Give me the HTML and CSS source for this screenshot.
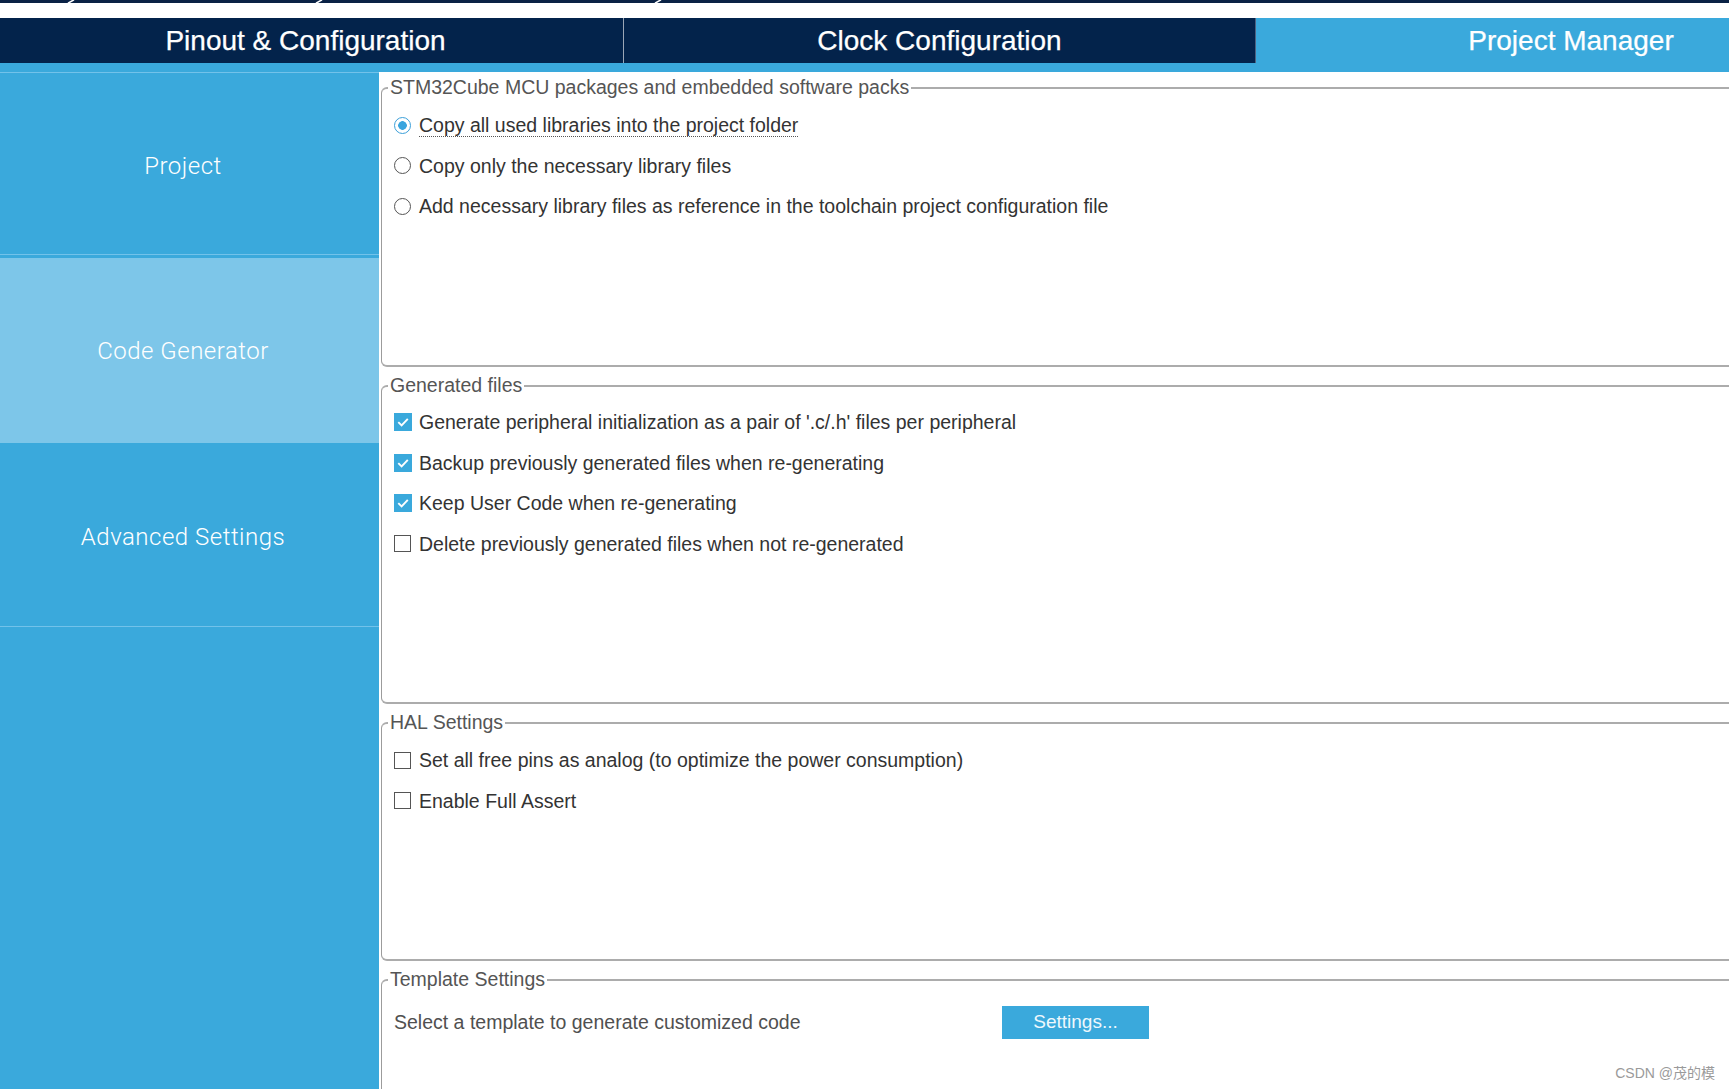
FILE: index.html
```html
<!DOCTYPE html>
<html lang="en">
<head>
<meta charset="utf-8">
<title>Project Manager - Code Generator</title>
<link rel="stylesheet" href="styles.css">
</head>
<body>
<div class="topstrip">
  <svg class="crumbs" width="1729" height="3" viewBox="0 0 1729 3">
    <rect x="0" y="0" width="1729" height="3" fill="#0a2245"/>
    <path d="M68 3.2 L74 -0.2 M316 3.2 L322 -0.2 M655 3.2 L661 -0.2" stroke="#fff" stroke-width="1.6"/>
  </svg>
</div>
<nav class="tabs">
  <div class="tab t1">Pinout &amp; Configuration</div>
  <div class="tab t2">Clock Configuration</div>
  <div class="tab t3">Project Manager</div>
</nav>
<div class="band"></div>
<div class="layout">
  <aside class="sidebar">
    <div class="side-item first">Project</div>
    <div class="side-item selected">Code Generator</div>
    <div class="side-item last">Advanced Settings</div>
  </aside>
  <main class="main">
    <section class="group g1">
      <div class="group-title"><span>STM32Cube MCU packages and embedded software packs</span></div>
      <div class="group-body">
        <div class="opt"><span class="radio on"></span><span class="txt focus">Copy all used libraries into the project folder</span></div>
        <div class="opt"><span class="radio"></span><span class="txt">Copy only the necessary library files</span></div>
        <div class="opt"><span class="radio"></span><span class="txt">Add necessary library files as reference in the toolchain project configuration file</span></div>
      </div>
    </section>
    <section class="group g2">
      <div class="group-title"><span>Generated files</span></div>
      <div class="group-body">
        <div class="opt"><svg class="cb" width="18" height="18" viewBox="0 0 18 18"><rect width="18" height="18" fill="#3aa9dc"/><path d="M4.3 9.2 L7.6 12.5 L13.8 5.8" fill="none" stroke="#fff" stroke-width="1.9"/></svg><span class="txt">Generate peripheral initialization as a pair of '.c/.h' files per peripheral</span></div>
        <div class="opt"><svg class="cb" width="18" height="18" viewBox="0 0 18 18"><rect width="18" height="18" fill="#3aa9dc"/><path d="M4.3 9.2 L7.6 12.5 L13.8 5.8" fill="none" stroke="#fff" stroke-width="1.9"/></svg><span class="txt">Backup previously generated files when re-generating</span></div>
        <div class="opt"><svg class="cb" width="18" height="18" viewBox="0 0 18 18"><rect width="18" height="18" fill="#3aa9dc"/><path d="M4.3 9.2 L7.6 12.5 L13.8 5.8" fill="none" stroke="#fff" stroke-width="1.9"/></svg><span class="txt">Keep User Code when re-generating</span></div>
        <div class="opt"><span class="box"></span><span class="txt">Delete previously generated files when not re-generated</span></div>
      </div>
    </section>
    <section class="group g3">
      <div class="group-title"><span>HAL Settings</span></div>
      <div class="group-body">
        <div class="opt"><span class="box"></span><span class="txt">Set all free pins as analog (to optimize the power consumption)</span></div>
        <div class="opt"><span class="box"></span><span class="txt">Enable Full Assert</span></div>
      </div>
    </section>
    <section class="group g4">
      <div class="group-title"><span>Template Settings</span></div>
      <div class="group-body">
        <div class="template-row">
          <span class="tlabel">Select a template to generate customized code</span>
          <button class="btn" type="button">Settings...</button>
        </div>
      </div>
    </section>
  </main>
</div>
<div class="watermark">CSDN @茂的模</div>
</body>
</html>
```
FILE: styles.css
```css
html, body {
  margin: 0;
  padding: 0;
}

body {
  width: 1729px;
  height: 1089px;
  overflow: hidden;
  position: relative;
  background: #ffffff;
  font-family: "Liberation Sans", Arial, "Noto Sans CJK SC", sans-serif;
}

.topstrip {
  height: 18px;
  background: #ffffff;
}

.crumbs {
  display: block;
}

.tabs {
  display: flex;
  height: 45px;
  background: #03234b;
  overflow: hidden;
}

.tab {
  flex: none;
  display: flex;
  align-items: center;
  justify-content: center;
  color: #ffffff;
  font-size: 28px;
  box-sizing: border-box;
  -webkit-text-stroke: 0.25px #ffffff;
}

.t1 {
  width: 624px;
  padding-right: 12px;
  border-right: 1px solid #9aa6b6;
}

.t2 {
  width: 632px;
  border-right: 1px solid #4d6180;
}

.t3 {
  width: 630px;
  background: #3aa9dc;
}

.band {
  height: 9px;
  background: #3aa9dc;
}

.layout {
  display: flex;
  height: 1017px;
}

.sidebar {
  flex: none;
  width: 379px;
  background: #3aa9dc;
  border-top: 1px solid #72c2ea;
  box-sizing: border-box;
}

.side-item {
  display: flex;
  align-items: center;
  justify-content: center;
  padding-right: 13px;
  color: #ffffff;
  font-family: Roboto, "Liberation Sans", Arial, sans-serif;
  font-weight: 300;
  letter-spacing: 0.5px;
  font-size: 24px;
  box-sizing: border-box;
}

.side-item.first {
  height: 182px;
  padding-top: 4px;
  border-bottom: 1px solid #72c2ea;
}

.side-item.selected {
  height: 185px;
  margin-top: 3px;
  background: #7dc6e9;
}

.side-item.last {
  height: 184px;
  padding-top: 4px;
  border-bottom: 1px solid #72c2ea;
}

.main {
  flex: 1;
  padding: 15px 0 0 2px;
  overflow: hidden;
}

.group {
  box-sizing: border-box;
  border-top: 2px solid #acacac;
  border-bottom: 2px solid #acacac;
  border-left: 1px solid #9c9c9c;
  border-right: none;
  border-radius: 6px 0 0 6px;
  padding-left: 12px;
  margin-bottom: 18px;
}

.g1 { height: 280px; }
.g2 { height: 319px; }
.g3 { height: 239px; }
.g4 { height: 140px; margin-bottom: 0; }

.group-title {
  margin: -13px 0 0 -6px;
  height: 22px;
  line-height: 22px;
  font-size: 19.5px;
  color: #555555;
}

.group-title span {
  background: #ffffff;
  padding: 0 2px;
}

.group-body {
  padding-top: 7px;
}

.g2 .group-body { padding-top: 6px; }
.g4 .group-body { padding-top: 12px; }

.opt {
  display: flex;
  align-items: center;
  gap: 8px;
  height: 40.5px;
  font-size: 19.5px;
  color: #333333;
}

.txt {
  line-height: 22px;
}

.txt.focus {
  border-bottom: 1px dotted #555555;
}

.radio {
  flex: none;
  width: 17px;
  height: 17px;
  border-radius: 50%;
  border: 1.3px solid #555555;
  box-sizing: border-box;
  background: #ffffff;
}

.radio.on {
  border: 1.6px solid #3b9fd9;
  background: radial-gradient(circle, #3aa5de 0 4px, #ffffff 4.6px);
}

.cb {
  flex: none;
  display: block;
  margin-right: -1px;
}

.box {
  flex: none;
  width: 17px;
  height: 17px;
  border: 1.5px solid #555555;
  box-sizing: border-box;
  background: #ffffff;
}

.template-row {
  display: flex;
  align-items: center;
  height: 40px;
}

.tlabel {
  flex: none;
  width: 608px;
  font-size: 19.5px;
  color: #505050;
}

.btn {
  flex: none;
  width: 147px;
  height: 33px;
  border: none;
  padding: 0;
  background: #3aa9dc;
  color: #eef8fd;
  font-family: "Liberation Sans", Arial, sans-serif;
  font-size: 19px;
}

.watermark {
  position: absolute;
  right: 14px;
  bottom: 7px;
  font-size: 14px;
  color: #9a9a9a;
}
```
